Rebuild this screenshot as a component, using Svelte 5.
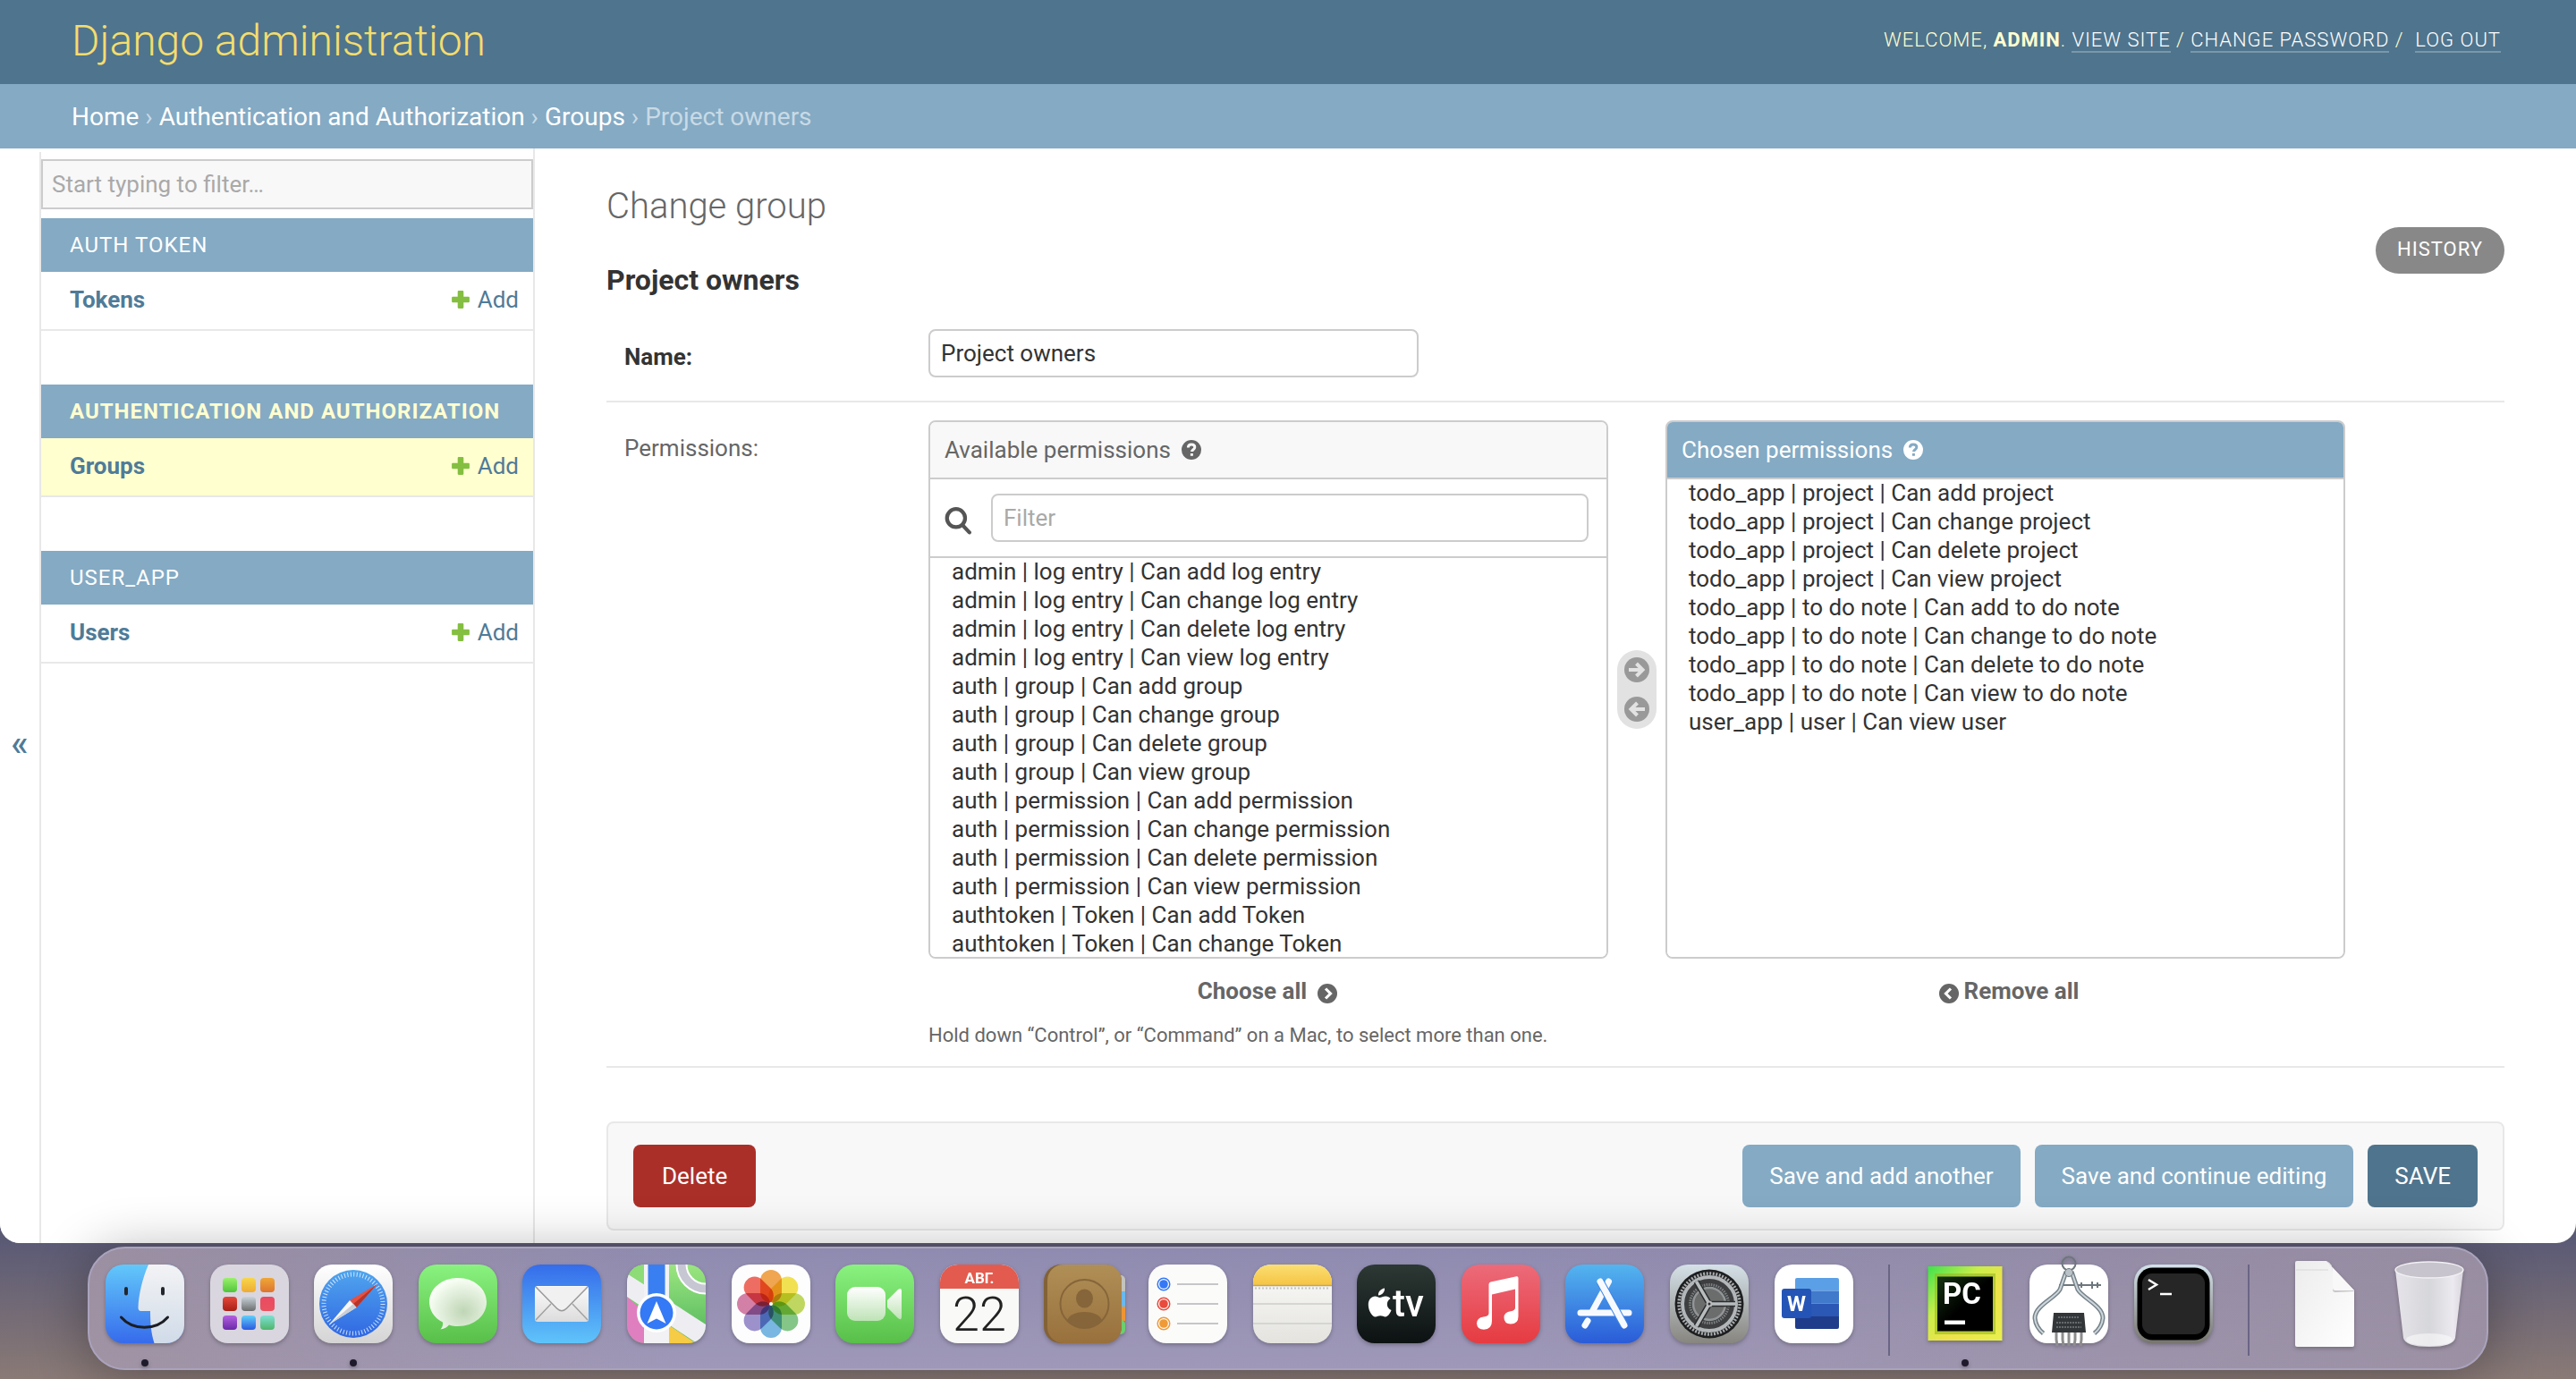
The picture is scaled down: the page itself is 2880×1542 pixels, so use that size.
<script>
  const modules = [
    { title: 'Auth Token', model: 'Tokens', current: false },
    { title: 'Authentication and Authorization', model: 'Groups', current: true },
    { title: 'user_app', model: 'Users', current: false }
  ];

  const available = [
    ['admin | log entry', 'log entry', ['add', 'change', 'delete', 'view']],
    ['auth | group', 'group', ['add', 'change', 'delete', 'view']],
    ['auth | permission', 'permission', ['add', 'change', 'delete', 'view']],
    ['authtoken | Token', 'Token', ['add', 'change']]
  ].flatMap(([prefix, noun, verbs]) => verbs.map((v) => `${prefix} | Can ${v} ${noun}`));

  const chosen = [
    ['todo_app | project', 'project', ['add', 'change', 'delete', 'view']],
    ['todo_app | to do note', 'to do note', ['add', 'change', 'delete', 'view']],
    ['user_app | user', 'user', ['view']]
  ].flatMap(([prefix, noun, verbs]) => verbs.map((v) => `${prefix} | Can ${v} ${noun}`));

  const launchpad = [
    ['#9af06c', '#4fc53a'], ['#f8d64a', '#eeab36'], ['#efa638', '#dd7430'],
    ['#e5483a', '#a81f16'], ['#c9d3da', '#6b6d6c'], ['#ea4a62', '#e9535f'],
    ['#b45fe0', '#6a2aa8'], ['#5fd0fb', '#2b59e0'], ['#7fe0d3', '#4fb56c']
  ];

  const petals = ['#f19a37', '#f2df3a', '#b9d44c', '#74c178', '#68aee0', '#8f83c6', '#d0709c', '#ee5a4d'];

  let name = $state('Project owners');
  let navFilter = $state('');
  let permFilter = $state('');
</script>

{#snippet help()}
  <svg class="help-icon" viewBox="0 0 22 22" aria-hidden="true">
    <circle cx="11" cy="11" r="11" fill="currentColor" />
    <path class="mark" d="M7.4 8.6c0-2.2 1.6-3.6 3.7-3.6s3.7 1.2 3.7 3.1c0 2.6-3.3 2.6-3.3 5" />
    <rect class="dot" x="9.9" y="15" width="3" height="2.8" />
  </svg>
{/snippet}

{#snippet circleIcon(kind)}
  <svg class="circle {kind}" viewBox="0 0 28 28" aria-hidden="true">
    <circle cx="14" cy="14" r="14" fill="currentColor" />
    {#if kind === 'right'}
      <path d="M5 14h15M13.5 7l7 7-7 7" />
    {:else if kind === 'left'}
      <path d="M23 14H8M14.5 7l-7 7 7 7" />
    {:else if kind === 'chev-right'}
      <path d="M11.5 7l7 7-7 7" />
    {:else}
      <path d="M16.5 7l-7 7 7 7" />
    {/if}
  </svg>
{/snippet}

<div class="desktop">
  <div class="window">
    <header>
      <a class="brand" href="#home">Django administration</a>
      <div class="user-tools">
        Welcome, <strong>admin</strong>.
        <a href="#site">View site</a> /
        <a href="#password">Change password</a> /&nbsp;
        <a href="#logout">Log out</a>
      </div>
    </header>

    <nav class="breadcrumbs" aria-label="Breadcrumbs">
      <a href="#home">Home</a> › <a href="#auth">Authentication and Authorization</a> ›
      <a href="#groups">Groups</a> › Project owners
    </nav>

    <div class="body">
      <button class="toggle" type="button" aria-label="Toggle navigation">«</button>

      <aside>
        <input class="nav-filter" type="search" aria-label="Filter navigation items" placeholder="Start typing to filter…" bind:value={navFilter} />
        {#each modules as m}
          <section class="module" class:current={m.current}>
            <h3><a href="#app">{m.title}</a></h3>
            <div class="model">
              <a class="model-name" href="#model">{m.model}</a>
              <a class="add" href="#add">
                <svg viewBox="0 0 20 20" aria-hidden="true"><path d="M8 2h4v6h6v4h-6v6H8v-6H2V8h6z" /></svg>
                Add
              </a>
            </div>
          </section>
        {/each}
      </aside>

      <main>
        <div class="title-row">
          <div>
            <h1>Change group</h1>
            <h2>Project owners</h2>
          </div>
          <a class="history" href="#history">History</a>
        </div>

        <form onsubmit={(e) => e.preventDefault()}>
          <div class="form-row">
            <label class="required" for="name">Name:</label>
            <input id="name" class="field name" type="text" bind:value={name} />
          </div>

          <div class="form-row">
            <label for="available">Permissions:</label>
            <div class="perm">
              <div class="selector">
                <div class="box">
                  <div class="box-title"><span>Available permissions</span>{@render help()}</div>
                  <div class="search">
                    <svg viewBox="0 0 28 30" aria-hidden="true"><circle cx="12" cy="12.5" r="9.5" /><path d="M19 20l7 7.5" /></svg>
                    <input class="field" type="text" aria-label="Filter available permissions" placeholder="Filter" bind:value={permFilter} />
                  </div>
                  <select id="available" multiple size="14">
                    {#each available as p}<option>{p}</option>{/each}
                  </select>
                </div>

                <div class="chooser">
                  <button type="button" aria-label="Choose">{@render circleIcon('right')}</button>
                  <button type="button" aria-label="Remove">{@render circleIcon('left')}</button>
                </div>

                <div class="box chosen">
                  <div class="box-title"><span>Chosen permissions</span>{@render help()}</div>
                  <select multiple size="9" aria-label="Chosen permissions">
                    {#each chosen as p}<option>{p}</option>{/each}
                  </select>
                </div>

                <a class="all choose" href="#choose">Choose all {@render circleIcon('chev-right')}</a>
                <a class="all remove" href="#remove">{@render circleIcon('chev-left')} Remove all</a>
              </div>
              <p>Hold down “Control”, or “Command” on a Mac, to select more than one.</p>
            </div>
          </div>

          <div class="submit-row">
            <button class="delete" type="button">Delete</button>
            <button type="submit">Save and add another</button>
            <button type="submit">Save and continue editing</button>
            <button class="default" type="submit">SAVE</button>
          </div>
        </form>
      </main>
    </div>
  </div>

  <div class="dock">
    <!-- Finder -->
    <div class="app running">
      <svg viewBox="0 0 88 88">
        <defs>
          <clipPath id="tile"><rect width="88" height="88" rx="20" /></clipPath>
          <linearGradient id="finderL" x2="0" y2="1"><stop stop-color="#62c8fa" /><stop offset="1" stop-color="#366bec" /></linearGradient>
          <linearGradient id="finderR" x2="0" y2="1"><stop stop-color="#f3f3f5" /><stop offset="1" stop-color="#d0dbe8" /></linearGradient>
        </defs>
        <g clip-path="url(#tile)">
          <rect width="88" height="88" fill="url(#finderL)" />
          <path d="M48 0C41 16 37 34 36.5 48q0 4 3 4h10.5c0 14 1 25 4.5 36H88V0z" fill="url(#finderR)" />
        </g>
        <path d="M23 27v5.5M64 27v5.5" stroke="#23262c" stroke-width="4" stroke-linecap="round" />
        <path d="M17.5 59c13 15 39 15 52 0" fill="none" stroke="#1b1d22" stroke-width="3" stroke-linecap="round" />
      </svg>
    </div>

    <!-- Launchpad -->
    <div class="app">
      <svg viewBox="0 0 88 88">
        <rect width="88" height="88" rx="20" fill="#d9d6df" />
        {#each launchpad as [top, bottom], i}
          <defs><linearGradient id="lp{i}" x2="0" y2="1"><stop stop-color={top} /><stop offset="1" stop-color={bottom} /></linearGradient></defs>
          <rect x={14 + (i % 3) * 21} y={15 + Math.floor(i / 3) * 21} width="16" height="16" rx="4" fill="url(#lp{i})" />
        {/each}
      </svg>
    </div>

    <!-- Safari -->
    <div class="app running">
      <svg viewBox="0 0 88 88">
        <defs>
          <linearGradient id="safBg" x2="0" y2="1"><stop stop-color="#fff" /><stop offset="1" stop-color="#d4d4d4" /></linearGradient>
          <linearGradient id="safFace" x2="0" y2="1"><stop stop-color="#50a5ee" /><stop offset="1" stop-color="#3067e2" /></linearGradient>
        </defs>
        <rect width="88" height="88" rx="20" fill="url(#safBg)" />
        <circle cx="44" cy="44" r="38" fill="url(#safFace)" />
        <circle cx="44" cy="44" r="33" fill="none" stroke="#e8f3ff" stroke-width="5" stroke-dasharray="1 2.456" opacity=".85" />
        <path d="M70.5 22L40 40l7.5 8z" fill="#e8503f" />
        <path d="M70.5 22L44 44l3.5 4z" fill="#b93428" />
        <path d="M17 67l23-27 7.5 8z" fill="#f7f7f7" />
        <path d="M17 67l27-23 3.5 4z" fill="#c9ced6" />
      </svg>
    </div>

    <!-- Messages -->
    <div class="app">
      <svg viewBox="0 0 88 88">
        <defs>
          <linearGradient id="green" x2="0" y2="1"><stop stop-color="#8af27f" /><stop offset="1" stop-color="#58bf49" /></linearGradient>
          <radialGradient id="bubble" cx=".6" cy=".65" r=".65"><stop stop-color="#bfd6b5" /><stop offset="1" stop-color="#f9fff6" /></radialGradient>
        </defs>
        <rect width="88" height="88" rx="20" fill="url(#green)" />
        <path d="M44 15c18 0 32 12 32 27S62 69 44 69c-3 0-7-.5-10-1.5-2 2.5-5 4.5-9.5 5 2-2 3-5 2.5-8C17 59.5 12 51 12 42c0-15 14-27 32-27z" fill="url(#bubble)" />
      </svg>
    </div>

    <!-- Mail -->
    <div class="app">
      <svg viewBox="0 0 88 88">
        <defs>
          <linearGradient id="mailBg" x2="0" y2="1"><stop stop-color="#356cea" /><stop offset="1" stop-color="#5fc4fa" /></linearGradient>
          <linearGradient id="mailEnv" x2="0" y2="1"><stop stop-color="#fbfbfb" /><stop offset="1" stop-color="#dcdcdc" /></linearGradient>
        </defs>
        <rect width="88" height="88" rx="20" fill="url(#mailBg)" />
        <rect x="14" y="24" width="60" height="40" rx="3" fill="url(#mailEnv)" />
        <path d="M15 62l17-18M73 62L56 44" stroke="#a2a2a2" stroke-width="1.5" />
        <path d="M15 25l23.5 24q5.5 5.5 11 0L73 25" fill="#f1f1f1" stroke="#999" stroke-width="1.5" />
      </svg>
    </div>

    <!-- Maps -->
    <div class="app">
      <svg viewBox="0 0 88 88">
        <defs><linearGradient id="mapGreen" x2="0" y2="1"><stop stop-color="#9be680" /><stop offset="1" stop-color="#4fb45a" /></linearGradient></defs>
        <g clip-path="url(#tile)">
          <rect width="88" height="88" fill="url(#mapGreen)" />
          <path d="M0 36l22 19v33H0z" fill="#df7fc0" />
          <path d="M0 10l88 57v21H78L0 36z" fill="#eeeef2" />
          <path d="M0 10l19 12V0H0z" fill="#8ddc78" />
          <path d="M19 0h28v88H19z" fill="#f2f2f5" />
          <path d="M23.5 0h19v54h-19z" fill="#3a7ff2" />
          <path d="M47 68l30 20H47z" fill="#f6cb45" />
          <circle cx="88" cy="0" r="27" fill="none" stroke="#fff" stroke-width="13" />
          <circle cx="88" cy="0" r="27" fill="none" stroke="#c6c7d2" stroke-width="9" />
        </g>
        <circle cx="33" cy="54" r="22" fill="#fff" />
        <circle cx="33" cy="54" r="18.5" fill="#3479f5" />
        <path d="M33 41l10.5 25L33 60.5 22.5 66z" fill="#fff" />
      </svg>
    </div>

    <!-- Photos -->
    <div class="app">
      <svg viewBox="0 0 88 88">
        <rect width="88" height="88" rx="20" fill="#fdfdfd" />
        <g class="petals">
          {#each petals as c, i}
            <rect x="32" y="6" width="24" height="37" rx="12" fill={c} opacity=".88" transform="rotate({i * 45} 44 44)" />
          {/each}
        </g>
        <circle cx="44" cy="44" r="2" fill="#fff" />
      </svg>
    </div>

    <!-- FaceTime -->
    <div class="app">
      <svg viewBox="0 0 88 88">
        <defs><linearGradient id="cam" x2="0" y2="1"><stop stop-color="#fff" /><stop offset="1" stop-color="#bfe3b6" /></linearGradient></defs>
        <rect width="88" height="88" rx="20" fill="url(#green)" />
        <rect x="13" y="25" width="43" height="38" rx="9" fill="url(#cam)" />
        <path d="M58 40l12-12q4-3 4 2v28q0 5-4 2L58 48z" fill="url(#cam)" />
      </svg>
    </div>

    <!-- Calendar -->
    <div class="app">
      <svg viewBox="0 0 88 88">
        <rect width="88" height="88" rx="20" fill="#f9f9f8" />
        <g clip-path="url(#tile)"><rect width="88" height="27" fill="#e35b4e" /></g>
        <text class="cal-month" x="44" y="21">АВГ.</text>
        <text class="cal-day" x="44" y="74">22</text>
      </svg>
    </div>

    <!-- Contacts -->
    <div class="app">
      <svg viewBox="0 0 88 88">
        <defs><linearGradient id="leather" x2="0" y2="1"><stop stop-color="#b08f56" /><stop offset="1" stop-color="#98703c" /></linearGradient></defs>
        <rect x="78" y="12" width="13" height="22" rx="5" fill="#c3c3bd" />
        <rect x="78" y="30" width="13" height="18" fill="#69b8ee" />
        <rect x="78" y="47" width="13" height="16" fill="#ef9433" />
        <rect x="78" y="62" width="13" height="16" rx="5" fill="#6ad06c" />
        <rect width="87" height="88" rx="19" fill="#836236" />
        <rect x="4" width="83" height="88" rx="18" fill="url(#leather)" />
        <circle cx="45.5" cy="44" r="27" fill="none" stroke="#86653a" stroke-width="2" />
        <ellipse cx="45.5" cy="38" rx="9.5" ry="10.5" fill="#86653a" />
        <path d="M26 62c5-12 34-12 39 0-9 12-30 12-39 0z" fill="#86653a" />
      </svg>
    </div>

    <!-- Reminders -->
    <div class="app">
      <svg viewBox="0 0 88 88">
        <rect width="88" height="88" rx="20" fill="#fbfbfa" />
        {#each ['#3478f6', '#ea4a3c', '#ef9a37'] as c, i}
          <circle cx="17" cy={22 + i * 22} r="6.8" fill="none" stroke={c} stroke-width="1.5" />
          <circle cx="17" cy={22 + i * 22} r="4.8" fill={c} />
          <path d="M32 {22 + i * 22}h46" stroke="#b5b5b8" stroke-width="1.5" />
        {/each}
      </svg>
    </div>

    <!-- Notes -->
    <div class="app">
      <svg viewBox="0 0 88 88">
        <defs>
          <linearGradient id="noteTop" x2="0" y2="1"><stop stop-color="#fadf73" /><stop offset="1" stop-color="#f6c443" /></linearGradient>
          <linearGradient id="notePage" x2="0" y2="1"><stop stop-color="#fbfbfa" /><stop offset="1" stop-color="#e4e3de" /></linearGradient>
        </defs>
        <rect width="88" height="88" rx="20" fill="url(#notePage)" />
        <g clip-path="url(#tile)">
          <rect width="88" height="23" fill="url(#noteTop)" />
          <path d="M0 23.5h88" stroke="#b9a47a" stroke-width="1.5" />
          <path d="M2 26.5h84" stroke="#c4c4c2" stroke-width="2" stroke-dasharray="2 2" />
          <path d="M0 44h88M0 66h88" stroke="#d5d5d2" stroke-width="2" />
        </g>
      </svg>
    </div>

    <!-- TV -->
    <div class="app">
      <svg viewBox="0 0 88 88">
        <defs><linearGradient id="tvBg" x2="0" y2="1"><stop stop-color="#2d3935" /><stop offset="1" stop-color="#0c1112" /></linearGradient></defs>
        <rect width="88" height="88" rx="20" fill="url(#tvBg)" />
        <path d="M31 26.5c.5 4-3 8-7 8-.5-4 3-7.5 7-8zM25.5 37c2 0 4-1.8 7-1.5 2 .1 4 1 5 2.6-5.5 3.4-4.5 11 1 13-1.5 3.8-4 7.4-6.6 7.4-2 0-3-1.2-5.6-1.2s-3.7 1.2-5.5 1.2c-4 0-8-7.5-8-13.5 0-6 3.7-9.5 7.5-9.5 2.4 0 4 1.5 5.2 1.5z" fill="#fff" />
        <text class="tv" x="40" y="58">tv</text>
      </svg>
    </div>

    <!-- Music -->
    <div class="app">
      <svg viewBox="0 0 88 88">
        <defs><linearGradient id="musicBg" x2="0" y2="1"><stop stop-color="#ec6b7a" /><stop offset="1" stop-color="#e63b41" /></linearGradient></defs>
        <rect width="88" height="88" rx="20" fill="url(#musicBg)" />
        <path d="M30.5 22q0-2 2-2.5l29-6.3q2-.3 2 1.7v43q0 8.6-8.5 8.6-7.5-.5-7.5-7t7.5-7.2q5-.8 5-4V27.500L34 33.500V63q0 9.5-9 9.8-7.5 0-8-6.8 0-6.5 7.5-7.5 6-.5 6-4z" fill="#fff" />
      </svg>
    </div>

    <!-- App Store -->
    <div class="app">
      <svg viewBox="0 0 88 88">
        <defs><linearGradient id="storeBg" x2="0" y2="1"><stop stop-color="#54b5ef" /><stop offset="1" stop-color="#2a5bd8" /></linearGradient></defs>
        <rect width="88" height="88" rx="20" fill="url(#storeBg)" />
        <g stroke="#f6faff" stroke-width="7" stroke-linecap="round">
          <path d="M17 54h54" />
          <path d="M48.5 19L31 51M25 63l-3 5" />
          <path d="M39 19l27 49" stroke="#3f86e4" stroke-width="9" stroke-linecap="butt" />
          <path d="M39 19l27 49" />
        </g>
      </svg>
    </div>

    <!-- System settings -->
    <div class="app">
      <svg viewBox="0 0 88 88">
        <defs><linearGradient id="setBg" x2="0" y2="1"><stop stop-color="#d5e1e8" /><stop offset="1" stop-color="#87857f" /></linearGradient></defs>
        <rect width="88" height="88" rx="20" fill="url(#setBg)" />
        <circle cx="44" cy="44" r="38.5" fill="#1d1e1f" />
        <circle cx="44" cy="44" r="34" fill="none" stroke="#a9acae" stroke-width="3.5" stroke-dasharray="2 1.56" />
        <circle cx="44" cy="44" r="30" fill="#3d3f41" stroke="#b3b6b8" stroke-width="4" />
        <circle cx="44" cy="44" r="21.5" fill="none" stroke="#7d8082" stroke-width="3" stroke-dasharray="1.5 1.2" />
        <circle cx="44" cy="44" r="18" fill="#6b6d6d" stroke="#929597" stroke-width="2.5" />
        <path d="M44 44h29M44 44L29.5 19M44 44L29.5 69" stroke="#2b2c2d" stroke-width="6.5" />
        <path d="M44 44h29M44 44L29.5 19M44 44L29.5 69" stroke="#b9bcbe" stroke-width="3.5" />
        <circle cx="44" cy="44" r="3.5" fill="#b9bcbe" />
        <circle cx="44" cy="44" r="1.5" fill="#333" />
      </svg>
    </div>

    <!-- Word -->
    <div class="app">
      <svg viewBox="0 0 88 88">
        <rect width="88" height="88" rx="20" fill="#fff" />
        <path d="M25 15h45q2 0 2 2v12.5H23V17q0-2 2-2z" fill="#5ba0e6" />
        <path d="M23 29.5h49v14H23z" fill="#4179cb" />
        <path d="M23 43.5h49V58H23z" fill="#2b57b5" />
        <path d="M23 58h49v12q0 2-2 2H25q-2 0-2-2z" fill="#1e3c89" />
        <rect x="8" y="27" width="33" height="33" rx="3" fill="#2454b6" />
        <text class="word" x="24.5" y="52">W</text>
      </svg>
    </div>

    <div class="divider"></div>

    <!-- PyCharm -->
    <div class="app running">
      <svg viewBox="0 0 88 88">
        <defs>
          <linearGradient id="pyBg" x2="1" y2="1"><stop stop-color="#3ee24c" /><stop offset=".35" stop-color="#c8ee4a" /><stop offset=".6" stop-color="#eee24a" /><stop offset="1" stop-color="#e8f04e" /></linearGradient>
          <linearGradient id="pyIn" x2="1" y2="1"><stop stop-color="#14340f" /><stop offset=".5" stop-color="#000" /></linearGradient>
        </defs>
        <rect x="2.5" y="2" width="83" height="83" fill="url(#pyBg)" />
        <rect x="10" y="10" width="68" height="68" fill="#94b81e" opacity=".6" />
        <rect x="13" y="13.5" width="62" height="61" fill="url(#pyIn)" />
        <text class="pc" x="19" y="44">PC</text>
        <rect x="21" y="62.5" width="23" height="4.5" fill="#fff" />
      </svg>
    </div>

    <!-- Disassembler -->
    <div class="app">
      <svg viewBox="0 0 88 88">
        <rect width="88" height="88" rx="20" fill="#fff" />
        <circle cx="44" cy="-1" r="7.5" fill="none" stroke="#6d777d" stroke-width="2" />
        <path d="M33 23h47M70 19v8M76 20v6M58 20v6" stroke="#6d777d" stroke-width="2" />
        <path d="M41 8L34 28C28 38 6 46 6 60q1 10 9.5 17M47 8l7 20c6 10 28 18 28 32q-1 10-9.5 17" fill="none" stroke="#76828a" stroke-width="5" />
        <path d="M41 8L34 28C28 38 6 46 6 60q1 10 9.5 17M47 8l7 20c6 10 28 18 28 32q-1 10-9.5 17" fill="none" stroke="#cdd6db" stroke-width="2" />
        <circle cx="44" cy="9" r="4.5" fill="#b9c2c7" stroke="#6d777d" />
        <path d="M30 74v10l1 7M37 74v10l1 7M44 74v17M51 74v10l-1 7M58 74v10l-1 7" stroke="#8d8d8d" stroke-width="3" fill="none" />
        <path d="M27 54h34l2 22H25z" fill="#333638" />
        <path d="M32 59h24M30 65h28M30 70h28" stroke="#777b7d" stroke-width="1.5" stroke-dasharray="2 1" />
      </svg>
    </div>

    <!-- Terminal -->
    <div class="app">
      <svg viewBox="0 0 88 88">
        <defs><linearGradient id="termBg" x2="0" y2="1"><stop stop-color="#d3e2ea" /><stop offset="1" stop-color="#77756f" /></linearGradient></defs>
        <rect width="88" height="88" rx="20" fill="url(#termBg)" />
        <rect x="3.5" y="3.5" width="81" height="81" rx="17" fill="#000" />
        <rect x="9" y="10" width="70" height="68" rx="11" fill="#262626" />
        <path d="M16 17l9 5.5-9 5.5" fill="none" stroke="#fff" stroke-width="2.5" />
        <path d="M29 33h13" stroke="#fff" stroke-width="2.5" />
      </svg>
    </div>

    <div class="divider"></div>

    <!-- Document -->
    <div class="app">
      <svg viewBox="0 0 88 88">
        <defs><linearGradient id="paper" x2="1" y2="1"><stop stop-color="#ececec" /><stop offset="1" stop-color="#fff" /></linearGradient></defs>
        <path d="M13-4h33l31 33v61q0 2-2 2H13q-2 0-2-2V-2q0-2 2-2z" fill="url(#paper)" />
        <path d="M46-4q7 3 7 12v20q0 3 3 3l21-1z" fill="#b5b0b8" opacity=".7" />
        <path d="M46-4q7 3 7 12v18q0 3 3 3h21z" fill="#f8f8f8" />
        <path d="M12 6h36" stroke="#d8d8d8" />
      </svg>
    </div>

    <!-- Trash -->
    <div class="app">
      <svg viewBox="0 0 88 88">
        <defs><linearGradient id="bin"><stop stop-color="#e6e4ea" /><stop offset=".5" stop-color="#d6d7da" /><stop offset=".85" stop-color="#eceaf0" /><stop offset="1" stop-color="#d8d6dc" /></linearGradient></defs>
        <path d="M6 6l9 76q2 10 29 10t29-10l9-76z" fill="url(#bin)" />
        <ellipse cx="44" cy="84" rx="26" ry="7" fill="#fff" opacity=".5" />
        <ellipse cx="44" cy="6" rx="38" ry="9" fill="#c8c4cd" stroke="#f2f1f4" stroke-width="1.5" />
      </svg>
    </div>
  </div>
</div>

<style>
  :global(body) {
    margin: 0;
    background: #5b5871;
  }

  .desktop {
    display: flex;
    flex-direction: column;
    min-height: 100vh;
    overflow: hidden;
    font-family: Roboto, 'Liberation Sans', sans-serif;
    font-size: 26px;
    line-height: 30px;
    color: #333;
    background: linear-gradient(to bottom, #5b5a75 90%, #8a7a76 100%);
  }

  .desktop *,
  .desktop *::before {
    box-sizing: border-box;
  }

  a {
    color: #4f7b98;
    text-decoration: none;
  }

  button,
  input,
  select {
    font: inherit;
    color: inherit;
    margin: 0;
  }

  button {
    border: 0;
    cursor: pointer;
  }

  .window {
    flex: 1;
    display: flex;
    flex-direction: column;
    background: #fff;
    border-radius: 0 0 22px 22px;
    overflow: hidden;
  }

  header {
    display: flex;
    justify-content: space-between;
    align-items: center;
    height: 94px;
    padding: 0 84px 0 80px;
    background: #4f748d;
  }

  .brand {
    font-size: 48px;
    line-height: 56px;
    font-weight: 300;
    color: #f4dd6d;
    padding-bottom: 2px;
  }

  .user-tools {
    font-size: 22px;
    font-weight: 300;
    letter-spacing: 1px;
    text-transform: uppercase;
    color: #ffffd0;
    padding-bottom: 4px;
    white-space: nowrap;
  }

  .user-tools strong {
    font-weight: 700;
  }

  .user-tools a {
    color: #fff;
    border-bottom: 2px solid rgba(255, 255, 255, 0.25);
  }

  .breadcrumbs {
    padding: 21px 80px 19px;
    font-size: 28px;
    line-height: 32px;
    color: #c8dae6;
    background: #84aac4;
  }

  .breadcrumbs a {
    color: #fff;
  }

  .body {
    flex: 1;
    display: flex;
  }

  .toggle {
    flex: none;
    width: 46px;
    margin-top: 4px;
    padding: 104px 0 0;
    font-size: 40px;
    line-height: 46px;
    font-weight: 500;
    color: #4f7b98;
    background: #fff;
    border-right: 2px solid #e8e8e8;
  }

  aside {
    flex: none;
    width: 552px;
    padding-top: 12px;
    border-right: 2px solid #e8e8e8;
  }

  .nav-filter {
    display: block;
    width: 100%;
    height: 56px;
    margin-bottom: 10px;
    padding: 0 10px;
    background: #f8f8f8;
    border: 2px solid #ccc;
    border-radius: 0;
    outline: none;
    appearance: none;
  }

  input::placeholder {
    color: #a9a9a9;
    opacity: 1;
  }

  .module {
    margin-bottom: 60px;
  }

  .module h3 {
    margin: 0;
    padding: 15px 32px;
    font-size: 24px;
    font-weight: 400;
    letter-spacing: 1px;
    text-transform: uppercase;
    white-space: nowrap;
    background: #84aac4;
  }

  .module h3 a {
    color: #fff;
  }

  .model {
    display: flex;
    justify-content: space-between;
    padding: 16px 16px 18px 32px;
    border-bottom: 2px solid #e8e8e8;
  }

  .model-name {
    font-weight: 700;
  }

  .add {
    display: flex;
    align-items: center;
    gap: 8px;
  }

  .add svg {
    width: 22px;
    height: 22px;
    fill: #84bf41;
    stroke: #84bf41;
    stroke-width: 2;
    stroke-linejoin: round;
  }

  .current h3 {
    font-weight: 700;
  }

  .current h3 a {
    color: #ffffd0;
  }

  .current .model {
    background: #ffffd0;
  }

  main {
    flex: 1;
    min-width: 0;
    padding: 40px 80px 14px;
  }

  .title-row {
    display: flex;
    justify-content: space-between;
    align-items: flex-start;
  }

  h1 {
    margin: 0 0 38px;
    font-size: 40px;
    line-height: 50px;
    font-weight: 300;
    color: #666;
  }

  h2 {
    margin: 0 0 16px;
    font-size: 32px;
    line-height: 38px;
    font-weight: 700;
  }

  .history {
    margin-top: 48px;
    padding: 10px 24px 12px;
    font-size: 22px;
    letter-spacing: 1px;
    text-transform: uppercase;
    color: #fff;
    background: #888;
    border-radius: 26px;
  }

  .form-row {
    display: flex;
    padding: 20px;
    border-bottom: 2px solid #e8e8e8;
  }

  .form-row label {
    flex: none;
    width: 340px;
    padding-top: 16px;
    color: #666;
  }

  .form-row .required {
    font-weight: 700;
    color: #333;
  }

  .form-row + .form-row {
    padding-right: 0;
  }

  .field {
    height: 54px;
    padding: 0 12px;
    background: #fff;
    border: 2px solid #ccc;
    border-radius: 8px;
    outline: none;
  }

  .name {
    width: 548px;
    margin-bottom: 6px;
  }

  .perm {
    flex: 1;
    min-width: 0;
  }

  .perm p {
    margin: 18px 0 0;
    font-size: 22px;
    line-height: 28px;
    color: #666;
  }

  .selector {
    display: grid;
    grid-template-columns: 1fr 44px 1fr;
    column-gap: 10px;
    row-gap: 18px;
    max-width: 1584px;
  }

  .box {
    display: flex;
    flex-direction: column;
    min-width: 0;
    height: 602px;
    border: 2px solid #ccc;
    border-radius: 8px;
    overflow: hidden;
  }

  .box-title {
    flex: none;
    display: flex;
    align-items: center;
    gap: 12px;
    height: 64px;
    padding: 0 16px;
    color: #666;
    background: #f8f8f8;
    border-bottom: 2px solid #ccc;
  }

  .chosen .box-title {
    color: #fff;
    background: #84aac4;
  }

  .help-icon {
    width: 22px;
    height: 22px;
  }

  .help-icon .mark {
    fill: none;
    stroke: #f8f8f8;
    stroke-width: 3;
  }

  .help-icon .dot {
    fill: #f8f8f8;
  }

  .chosen .help-icon .mark {
    stroke: #84aac4;
  }

  .chosen .help-icon .dot {
    fill: #84aac4;
  }

  .search {
    flex: none;
    display: flex;
    align-items: center;
    gap: 22px;
    height: 88px;
    padding: 0 20px 0 16px;
    border-bottom: 2px solid #ccc;
  }

  .search svg {
    width: 30px;
    height: 32px;
    margin-top: 6px;
    fill: none;
    stroke: #555;
    stroke-width: 4;
    stroke-linecap: round;
  }

  .search .field {
    flex: 1;
    min-width: 0;
  }

  select {
    flex: 1;
    width: 100%;
    min-height: 0;
    padding: 0;
    border: 0;
    background: #fff;
    outline: none;
    overflow: hidden;
    scrollbar-width: none;
  }

  option {
    height: 32px;
    min-height: 32px;
    padding: 0 24px;
    line-height: 32px;
  }

  .chooser {
    align-self: center;
    display: flex;
    flex-direction: column;
    gap: 16px;
    padding: 8px;
    background: #e2e2e2;
    border-radius: 22px;
  }

  .chooser button {
    display: block;
    height: 28px;
    padding: 0;
    color: #999;
    background: none;
  }

  .circle {
    display: block;
    width: 28px;
    height: 28px;
  }

  .circle path {
    fill: none;
    stroke: #fff;
    stroke-width: 4;
  }

  .chooser .circle path {
    stroke: #e2e2e2;
  }

  .all {
    display: flex;
    justify-content: center;
    align-items: center;
    gap: 12px;
    line-height: 36px;
    font-weight: 700;
    color: #666;
  }

  .all .circle {
    width: 22px;
    height: 22px;
    margin-top: 6px;
  }

  .choose {
    grid-column: 1;
    padding-right: 2px;
  }

  .remove {
    grid-column: 3;
    gap: 6px;
    padding-left: 8px;
  }

  .submit-row {
    display: flex;
    gap: 16px;
    margin-top: 60px;
    padding: 24px 28px;
    background: #f8f8f8;
    border: 2px solid #e8e8e8;
    border-radius: 8px;
  }

  .submit-row button {
    height: 70px;
    padding: 0 30px;
    color: #fff;
    background: #84aac4;
    border-radius: 8px;
  }

  .submit-row .delete {
    margin-right: auto;
    background: #ab2f29;
  }

  .submit-row .default {
    background: #4f748d;
  }

  .submit-row .delete {
    padding: 0 32px;
  }

  .dock {
    position: relative;
    display: flex;
    justify-content: space-between;
    align-items: flex-start;
    height: 138px;
    margin: 4px 98px 10px;
    padding: 18px 20px 0 18px;
    border: 2px solid #aaa3bd;
    border-radius: 42px;
    background:
      linear-gradient(to right, rgba(160, 145, 155, 0.7), rgba(150, 143, 182, 0) 25%, rgba(150, 143, 182, 0) 60%, rgba(155, 142, 155, 0.7)),
      linear-gradient(to bottom, #8f8bb0, #9f98b8);
    box-shadow: 0 6px 60px rgba(0, 0, 0, 0.32);
  }

  .app {
    position: relative;
    flex: none;
    width: 88px;
    height: 88px;
    filter: drop-shadow(0 2px 2px rgba(0, 0, 0, 0.25));
  }

  .app svg {
    display: block;
    width: 100%;
    height: 100%;
    overflow: visible;
  }

  .running::before {
    content: '';
    position: absolute;
    left: 40px;
    top: 106px;
    width: 8px;
    height: 8px;
    border-radius: 50%;
    background: #1e1a2c;
  }

  .divider {
    width: 2px;
    height: 102px;
    margin: 0 11px;
    background: #6b6585;
  }

  .petals rect {
    mix-blend-mode: multiply;
  }

  .cal-month {
    font-size: 17px;
    font-weight: 700;
    fill: #fff;
    text-anchor: middle;
  }

  .cal-day {
    font-size: 54px;
    font-weight: 300;
    fill: #222;
    text-anchor: middle;
  }

  .tv {
    font-size: 42px;
    font-weight: 500;
    fill: #fff;
  }

  .word {
    font-size: 24px;
    font-weight: 700;
    fill: #fff;
    text-anchor: middle;
  }

  .pc {
    font-size: 33px;
    font-weight: 700;
    fill: #fff;
  }
</style>
